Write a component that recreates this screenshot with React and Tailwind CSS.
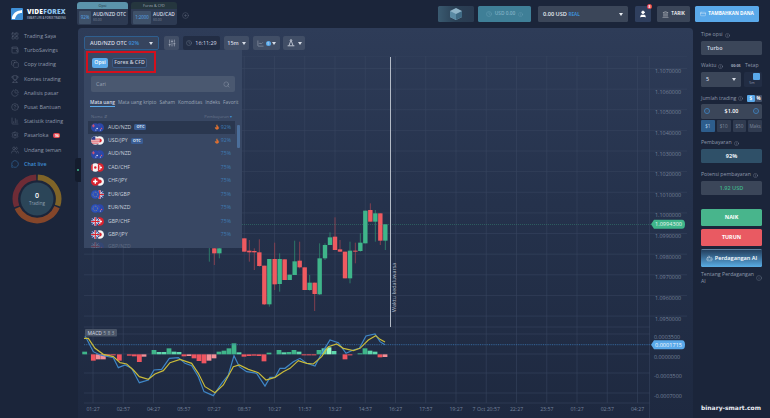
import { BarChart3, Clock, Copy, Flame, HelpCircle, Info, LayoutGrid, MessageCircle, Minus, PieChart, Plus, PlusCircle, Search, Settings, Trophy, User, Users, Wallet, CreditCard, Bot, SlidersHorizontal, LineChart, Landmark } from 'lucide-react';

const menu = [
  { label: 'Trading Saya', icon: LayoutGrid },
  { label: 'TurboSavings', icon: Wallet },
  { label: 'Copy trading', icon: Copy },
  { label: 'Kontes trading', icon: Trophy },
  { label: 'Analisis pasar', icon: PieChart },
  { label: 'Pusat Bantuan', icon: HelpCircle },
  { label: 'Statistik trading', icon: BarChart3 },
  { label: 'Pasarloka', icon: Settings, badge: true },
  { label: 'Undang teman', icon: Users },
  { label: 'Chat live', icon: MessageCircle, active: true },
];

const pairs = [
  { name: 'AUD/NZD', a: 'aud', b: 'nzd', pct: '92%', badge: 'OTC', hot: true },
  { name: 'USD/JPY', a: 'usd', b: 'jpy', pct: '92%', badge: 'OTC', hot: true },
  { name: 'AUD/NZD', a: 'aud', b: 'nzd', pct: '75%' },
  { name: 'CAD/CHF', a: 'cad', b: 'chf', pct: '75%' },
  { name: 'CHF/JPY', a: 'chf', b: 'jpy', pct: '75%' },
  { name: 'EUR/GBP', a: 'eur', b: 'gbp', pct: '75%' },
  { name: 'EUR/NZD', a: 'eur', b: 'nzd', pct: '75%' },
  { name: 'GBP/CHF', a: 'gbp', b: 'chf', pct: '75%' },
  { name: 'GBP/JPY', a: 'gbp', b: 'jpy', pct: '75%' },
];

// candles: x, body top, body bottom, wick top, wick bottom, up
const candles = [
  [388, 140, 141, 140, 185, 1], [403, 145, 160, 140, 195, 0], [418, 145, 160, 140, 175, 1],
  [493, 115, 155, 115, 155, 0], [508, 152, 157, 120, 185, 0], [523, 153, 157, 145, 210, 0],
  [538, 157, 198, 118, 200, 0], [553, 197, 313, 197, 315, 0], [568, 177, 313, 177, 320, 1],
  [584, 177, 253, 128, 270, 0], [599, 177, 252, 160, 275, 1], [614, 178, 240, 178, 240, 0],
  [629, 224, 240, 224, 240, 1], [644, 184, 225, 122, 225, 1], [659, 182, 202, 125, 205, 0],
  [674, 202, 270, 202, 270, 0], [689, 248, 270, 225, 272, 1], [704, 248, 282, 248, 333, 0],
  [719, 175, 283, 130, 285, 1], [735, 135, 175, 130, 180, 1], [750, 112, 135, 97, 135, 1],
  [765, 110, 150, 52, 150, 0], [780, 148, 155, 120, 156, 0], [795, 155, 235, 155, 235, 0],
  [810, 152, 235, 125, 250, 1], [826, 152, 155, 128, 190, 0], [841, 128, 153, 100, 155, 1],
  [856, 32, 130, 32, 130, 1], [871, 30, 65, 10, 65, 0], [886, 40, 65, 30, 125, 1],
  [901, 40, 122, 40, 135, 0], [916, 73, 122, 73, 150, 1],
];

// histogram: x, edge y, tone (g green, r red, l light red, m mint)
const histogram = [
  [14, 95, 'g'], [40, 122, 'r'], [55, 118, 'l'], [70, 118, 'l'], [85, 107, 'r'], [100, 106, 'r'], [118, 122, 'r'],
  [148, 107, 'r'], [163, 109, 'r'], [178, 126, 'r'], [192, 110, 'l'], [222, 90, 'g'], [237, 96, 'm'], [252, 96, 'm'],
  [267, 85, 'g'], [282, 95, 'm'], [297, 96, 'm'], [312, 109, 'r'], [327, 108, 'l'], [342, 115, 'r'], [357, 123, 'r'],
  [372, 130, 'r'], [387, 122, 'l'], [402, 115, 'l'], [417, 95, 'g'], [432, 92, 'g'], [447, 85, 'g'], [462, 70, 'g'],
  [477, 97, 'm'], [492, 110, 'r'], [507, 108, 'r'], [522, 107, 'r'], [537, 108, 'r'], [552, 124, 'r'], [567, 98, 'g'],
  [597, 90, 'g'], [612, 97, 'm'], [627, 96, 'g'], [642, 90, 'g'], [657, 95, 'm'], [672, 106, 'r'], [687, 106, 'r'],
  [702, 106, 'r'], [717, 90, 'g'], [732, 85, 'm'], [747, 82, 'b'], [762, 93, 'm'], [795, 118, 'r'], [810, 106, 'r'],
  [840, 100, 'g'], [855, 85, 'g'], [870, 92, 'm'], [885, 95, 'm'], [900, 112, 'r'], [915, 111, 'l'],
];

const toneColor = { g: '#3fb58a', m: '#5fd8ad', b: '#9dfbc8', r: '#ef5560', l: '#f48f97' };

const macdBlue = [[15, 47], [40, 95], [60, 105], [100, 113], [115, 143], [135, 135], [155, 145], [178, 188], [205, 180], [222, 150], [245, 148], [268, 115], [295, 113], [315, 130], [335, 137], [355, 170], [372, 215], [400, 227], [425, 190], [445, 165], [462, 107], [478, 140], [500, 155], [530, 160], [555, 198], [570, 172], [585, 172], [600, 145], [615, 145], [640, 125], [660, 115], [680, 130], [705, 138], [725, 100], [750, 60], [775, 68], [798, 100], [820, 90], [838, 85], [858, 48], [885, 42], [900, 65], [915, 74]];
const macdYellow = [[12, 55], [25, 55], [45, 85], [70, 103], [100, 110], [120, 128], [140, 132], [160, 150], [178, 170], [205, 178], [225, 162], [250, 152], [270, 128], [300, 118], [335, 130], [355, 160], [375, 200], [405, 218], [430, 195], [460, 140], [478, 135], [505, 148], [535, 158], [558, 180], [585, 172], [610, 155], [630, 145], [655, 122], [680, 130], [700, 132], [725, 110], [745, 80], [770, 72], [790, 85], [820, 92], [840, 85], [865, 60], [887, 47], [900, 58], [915, 66]];

const times = ['01:27', '02:57', '04:27', '05:57', '07:27', '08:57', '10:27', '11:57', '13:27', '14:57', '16:27', '17:57', '19:27', '7 Oct 20:57', '22:27', '23:57', '01:27', '02:57', '04:27'];
const prices = ['1.1070000', '1.1060000', '1.1050000', '1.1040000', '1.1030000', '1.1020000', '1.1010000', '1.1000000', '1.0990000', '1.0980000', '1.0970000', '1.0960000', '1.0950000'];
const macdLevels = [['0.0003500', 337], ['0.0000000', 357], ['-0.0003500', 376], ['-0.0007000', 396]];

function macdPoints(list) {
  return list.map(([x, y]) => `${80 + x / 3},${320 + y / 3}`).join(' ');
}

function Caret() {
  return (
    <svg width="4" height="3" viewBox="0 0 4 3" className="shrink-0">
      <path d="M0 0h4L2 3z" fill="currentColor" />
    </svg>
  );
}

function Coin({ kind, cx }) {
  const r = 4.3;
  const cy = 4.5;
  if (kind === 'aud' || kind === 'nzd') {
    return (
      <g>
        <circle cx={cx} cy={cy} r={r} fill="#2b47a8" />
        <path d={`M${cx - 3.4} ${cy - 1.6}h3M${cx - 1.9} ${cy - 3.2}v3`} stroke="#e2566a" strokeWidth="0.9" />
        <circle cx={cx + 1.8} cy={cy + 1} r="0.7" fill={kind === 'aud' ? '#fff' : '#e2566a'} />
        <circle cx={cx + 0.6} cy={cy + 2.4} r="0.5" fill="#fff" />
      </g>
    );
  }
  if (kind === 'usd') {
    return (
      <g>
        <circle cx={cx} cy={cy} r={r} fill="#f2f2f2" />
        <path d={`M${cx - 3.8} ${cy - 1.4}h7.6M${cx - 4.2} ${cy + 0.6}h8.4M${cx - 3.4} ${cy + 2.6}h6.8`} stroke="#d8323f" strokeWidth="0.9" />
        <path d={`M${cx - 3.8} ${cy - 2}a4.3 4.3 0 0 1 3.8 -2.3v3.6h-3.8z`} fill="#2b3f90" />
      </g>
    );
  }
  if (kind === 'jpy') {
    return (
      <g>
        <circle cx={cx} cy={cy} r={r} fill="#f4f4f4" />
        <circle cx={cx} cy={cy} r="2" fill="#d8232f" />
      </g>
    );
  }
  if (kind === 'cad') {
    return (
      <g>
        <circle cx={cx} cy={cy} r={r} fill="#f4f4f4" />
        <path d={`M${cx - 4.2} ${cy - 1.2}a4.3 4.3 0 0 1 1.6 -2.5v7.4a4.3 4.3 0 0 1 -1.6 -2.5zM${cx + 4.2} ${cy - 1.2}a4.3 4.3 0 0 0 -1.6 -2.5v7.4a4.3 4.3 0 0 0 1.6 -2.5z`} fill="#d8232f" />
        <circle cx={cx} cy={cy} r="1.2" fill="#d8232f" />
      </g>
    );
  }
  if (kind === 'chf') {
    return (
      <g>
        <circle cx={cx} cy={cy} r={r} fill="#d8232f" />
        <path d={`M${cx - 2.2} ${cy}h4.4M${cx} ${cy - 2.2}v4.4`} stroke="#fff" strokeWidth="1.4" />
      </g>
    );
  }
  if (kind === 'eur') {
    return (
      <g>
        <circle cx={cx} cy={cy} r={r} fill="#2a4fbc" />
        <circle cx={cx} cy={cy} r="2.3" fill="none" stroke="#e6c94a" strokeWidth="0.6" strokeDasharray="0.7 0.9" />
      </g>
    );
  }
  return (
    <g>
      <circle cx={cx} cy={cy} r={r} fill="#2f4694" />
      <path d={`M${cx - 3} ${cy - 3}l6 6M${cx + 3} ${cy - 3}l-6 6`} stroke="#f3f3f3" strokeWidth="1" />
      <path d={`M${cx - 4.2} ${cy}h8.4M${cx} ${cy - 4.2}v8.4`} stroke="#f3f3f3" strokeWidth="2" />
      <path d={`M${cx - 4.2} ${cy}h8.4M${cx} ${cy - 4.2}v8.4`} stroke="#d8232f" strokeWidth="1.1" />
    </g>
  );
}

function Flags({ a, b }) {
  return (
    <svg width="13" height="9" viewBox="0 0 13 9" className="shrink-0">
      <Coin kind={b} cx={8.7} />
      <Coin kind={a} cx={4.3} />
    </svg>
  );
}

function arc(from, to, r) {
  const p = (deg) => {
    const t = ((deg - 90) * Math.PI) / 180;
    return `${25 + r * Math.cos(t)} ${25 + r * Math.sin(t)}`;
  };
  return `M${p(from)} A${r} ${r} 0 ${to - from > 180 ? 1 : 0} 1 ${p(to)}`;
}

function Label({ children }) {
  return (
    <div className="flex h-[6px] items-center gap-[2px] text-[5.2px] leading-none whitespace-nowrap text-[#8d98aa]">
      {children}
      <Info size={5} strokeWidth={1.5} />
    </div>
  );
}

function Sidebar() {
  return (
    <aside className="relative flex w-[78px] shrink-0 flex-col pt-[1px]">
      {menu.map((item) => {
        const Icon = item.icon;
        return (
          <div key={item.label} className={`flex h-[14.2px] items-center gap-[5px] pl-[11px] text-[5.4px] ${item.active ? 'font-semibold text-[#3f8fd6]' : 'text-[#8e98aa]'}`}>
            <Icon size={8} strokeWidth={1.2} className={item.active ? 'text-[#3f8fd6]' : 'text-[#6a7588]'} />
            <span>{item.label}</span>
            {item.badge && <span className="rounded-[2px] bg-[#e5484d] px-[1.5px] text-[3.5px] leading-[5px] font-bold text-white">96</span>}
          </div>
        );
      })}
      <div className="absolute top-[130px] right-[-3px] z-10 flex h-[24px] w-[6px] items-center justify-center rounded-l-[3px] bg-[#141c2d]">
        <span className="h-[2px] w-[2px] rounded-full bg-[#3fb58a]" />
      </div>
      <div className="relative mt-[3px] ml-[12px] h-[50px] w-[50px]">
        <svg width="50" height="50" viewBox="0 0 50 50">
          <path d={arc(2, 108, 21.6)} fill="none" stroke="#7f6428" strokeWidth="5.6" />
          <path d={arc(112, 246, 21.6)} fill="none" stroke="#84462a" strokeWidth="5.6" />
          <path d={arc(250, 358, 21.6)} fill="none" stroke="#6e2c36" strokeWidth="5.6" />
          <circle cx="25" cy="25" r="16.5" fill="#2b4558" />
        </svg>
        <div className="absolute inset-0 flex flex-col items-center justify-center text-white">
          <span className="text-[7px] leading-[8px] font-semibold">0</span>
          <span className="text-[4.5px] leading-[6px] text-[#8fa0b0]">Trading</span>
        </div>
      </div>
    </aside>
  );
}

function Toolbar() {
  return (
    <div className="flex h-[28px] items-start gap-[4px] pt-[8px] pl-[6px] text-[5.4px] text-[#d5dbe5]">
      <div className="flex h-[14px] w-[75px] items-center justify-between rounded-[2px] border border-[#2f5f8f] bg-[#36445e] px-[5px] font-semibold">
        <span>AUD/NZD OTC <span className="text-[#3f8fd6]">92%</span></span>
        <Caret />
      </div>
      <div className="ml-[1px] flex h-[14px] w-[15px] items-center justify-center rounded-[2px] bg-[#414e66]">
        <SlidersHorizontal size={8} strokeWidth={1.4} className="rotate-90" />
      </div>
      <div className="flex h-[14px] w-[37px] items-center justify-center gap-[3px] rounded-[2px] bg-[#222d44]">
        <Clock size={6} strokeWidth={1.2} className="text-[#8d98aa]" />
        <span>16:11:29</span>
      </div>
      <div className="flex h-[14px] w-[25px] items-center justify-center gap-[3px] rounded-[2px] bg-[#414e66] font-semibold">
        15m <Caret />
      </div>
      <div className="flex h-[14px] w-[27px] items-center justify-center gap-[1.5px] rounded-[2px] bg-[#414e66]">
        <LineChart size={7} strokeWidth={1.2} />
        <span className="h-[5px] w-[5px] rounded-full bg-[#5aa9ea] text-center text-[4px] leading-[5px] text-white">1</span>
        <Caret />
      </div>
      <div className="ml-[-1px] flex h-[14px] w-[22px] items-center justify-center gap-[3px] rounded-[2px] bg-[#414e66]">
        <svg width="8" height="8" viewBox="0 0 8 8" fill="none" stroke="currentColor" strokeWidth="0.8">
          <circle cx="4" cy="1.4" r="0.8" />
          <path d="M3.6 2.2L2 6.6M4.4 2.2L6 6.6M0.6 6.8h6.8" />
        </svg>
        <Caret />
      </div>
    </div>
  );
}

function AssetDropdown() {
  return (
    <div className="absolute top-[22px] left-[6px] z-10 h-[198px] w-[158px] overflow-hidden bg-[#384763] text-[#c9d0dc]">
      <div className="absolute top-[1px] left-[2px] h-[22px] w-[70px] border-2 border-[#d4101c]" />
      <div className="flex gap-[4px] pt-[8px] pl-[8px] text-[5.2px] font-semibold">
        <span className="flex h-[10px] w-[16px] items-center justify-center rounded-[2px] bg-[#5aa9ea] text-white">Opsi</span>
        <span className="flex h-[10px] w-[35px] items-center justify-center rounded-[2px] border border-[#3c5a85] bg-[#2f3d58]">Forex &amp; CFD</span>
      </div>
      <div className="mx-[7px] mt-[8px] flex h-[16px] items-center justify-between rounded-[2px] bg-[#4a5870] px-[5px] text-[5.4px] text-[#97a2b3]">
        <span>Cari</span>
        <Search size={7} strokeWidth={1.4} />
      </div>
      <div className="mt-[7px] ml-[6px] flex gap-[3px] text-[4.85px] whitespace-nowrap text-[#9aa5b6]">
        <span className="border-b border-[#5aa9ea] font-semibold text-[#d5dbe5]">Mata uang</span>
        <span>Mata uang kripto</span>
        <span>Saham</span>
        <span>Komoditas</span>
        <span>Indeks</span>
        <span>Favorit</span>
      </div>
      <div className="mt-[6.5px] flex h-[7px] items-center justify-between pr-[10px] pl-[7px] text-[4.2px] text-[#67738a]">
        <span>Nama ⇵</span>
        <span>Pembayaran <span className="text-[#3f8fd6]">▾</span></span>
      </div>
      <div className="mx-[4px] w-[147px]">
        {pairs.map((pair, i) => (
          <div key={i} className={`flex h-[13.45px] items-center gap-[3px] pr-[4px] pl-[3px] text-[5.2px] ${i === 0 ? 'bg-[#2a374f]' : ''}`}>
            <Flags a={pair.a} b={pair.b} />
            <span className="ml-[1px]">{pair.name}</span>
            {pair.badge && <span className="rounded-[1.5px] bg-[#3a5d94] px-[2px] text-[4px] leading-[6px] font-bold text-[#dbe5f3]">{pair.badge}</span>}
            <span className="ml-auto flex items-center gap-[1px] text-[#3f7cb5]">
              {pair.hot && <Flame size={6} strokeWidth={1} className="fill-[#e8682c] text-[#f0a040]" />}
              {pair.pct}
            </span>
          </div>
        ))}
        <div className="flex h-[10px] items-center gap-[3px] pl-[3px] text-[5.2px] opacity-25">
          <Flags a="gbp" b="nzd" />
          <span className="ml-[1px]">GBP/NZD</span>
        </div>
      </div>
      <div className="absolute top-[75px] right-[2px] h-[23px] w-[3.5px] rounded-[1px] bg-[#4b6e9a]" />
    </div>
  );
}

function Chart() {
  const vLines = times.map((_, i) => 93 + i * 30.25);
  const hLines = prices.map((_, i) => 68.5 + i * 20.63);
  return (
    <svg className="block h-[362px] w-[615px]" viewBox="78 56 615 362" fontFamily="'Open Sans', sans-serif">
      <g stroke="#3d4a64" strokeWidth="0.6" opacity="0.8">
        {vLines.map((x) => <line key={x} x1={x} x2={x} y1="56" y2="403" />)}
        {hLines.map((y) => <line key={y} x1="84" x2="687" y1={y} y2={y} />)}
        <line x1="84" x2="687" y1="56" y2="56" />
        <line x1="84" x2="650" y1="327" y2="327" />
        {[334, 354, 373, 393, 403].map((y) => <line key={y} x1="84" x2="650" y1={y} y2={y} />)}
        <line x1="649.5" x2="649.5" y1="56" y2="418" />
      </g>

      {prices.map((p, i) => (
        <text key={p} x="655" y={73 + i * 20.63} fontSize="5.4" fill="#75829a">{p}</text>
      ))}
      {macdLevels.map(([p, y]) => (
        <text key={p} x="654" y={y + 2} fontSize="5.4" fill="#75829a">{p}</text>
      ))}
      {times.map((t, i) => (
        <text key={i} x={vLines[i]} y="411" fontSize="5.2" fill="#75829a" textAnchor="middle">{t}</text>
      ))}

      {candles.map(([x, top, bottom, wickTop, wickBottom, up]) => {
        const px = 80 + x / 3;
        return (
          <g key={x}>
            <line x1={px} x2={px} y1={200 + wickTop / 3} y2={200 + wickBottom / 3} stroke={up ? '#2f8a6f' : '#9b4450'} strokeWidth="0.8" />
            <rect x={px - 2.2} y={200 + top / 3} width="4.4" height={(bottom - top) / 3} fill={up ? '#3fb58a' : '#ef5a60'} />
          </g>
        );
      })}

      <line x1="242" x2="651" y1="224.3" y2="224.3" stroke="#3fb58a" strokeWidth="0.6" strokeDasharray="1 1" opacity="0.7" />
      <path d="M651 224.3l3 -4.5h28q3 0 3 4.5t-3 4.5h-28z" fill="#3fb58a" />
      <text x="668.5" y="226.3" fontSize="5.6" fill="#e8f6f0" textAnchor="middle">1.0994300</text>

      <line x1="390.5" x2="390.5" y1="57" y2="327" stroke="#b4bbc6" strokeWidth="1" />
      <text transform="translate(396 312) rotate(-90)" fontSize="5.4" fill="#b0b9c6">Waktu kedaluwarsa</text>

      {histogram.map(([x, edge, tone]) => {
        const y = 320 + Math.min(edge, 103) / 3;
        const h = Math.abs(edge - 103) / 3;
        return <rect key={x} x={80 + x / 3 - 2.4} y={y} width="4.8" height={h} fill={toneColor[tone]} />;
      })}

      <line x1="84" x2="651" y1="344.7" y2="344.7" stroke="#3d7fc0" strokeWidth="0.7" strokeDasharray="1 0.8" />
      <polyline points={macdPoints(macdBlue)} fill="none" stroke="#3f86c6" strokeWidth="1.2" />
      <polyline points={macdPoints(macdYellow)} fill="none" stroke="#c9bb3a" strokeWidth="1.2" />

      <path d="M651 344.7l3 -4.5h28q3 0 3 4.5t-3 4.5h-28z" fill="#5aa9ea" />
      <text x="668.5" y="346.7" fontSize="5.6" fill="#f2f8fe" textAnchor="middle">0.0001715</text>

      <rect x="85" y="329" width="32" height="7.5" rx="1" fill="#4a5568" />
      <text x="87.5" y="334.7" fontSize="5" fill="#d5dbe5">MACD <tspan fill="#a3adbb">5 8 3</tspan></text>
    </svg>
  );
}

function TradePanel() {
  return (
    <aside className="flex w-[77px] shrink-0 flex-col pt-[4px] pr-[8px] pl-[8px] text-[#d5dbe5]">
      <Label>Tipe opsi</Label>
      <div className="mt-[3px] flex h-[14px] items-center rounded-[1.5px] bg-[#3b4659] pl-[6px] text-[5.4px] font-semibold">Turbo</div>

      <div className="mt-[8px] flex h-[6px] items-center">
        <div className="w-[30px]"><Label>Waktu</Label></div>
        <span className="w-[14px] text-[3.8px] font-bold text-[#a3adbb]">00:05</span>
        <span className="text-[5.2px] text-[#8d98aa]">Tetap</span>
      </div>
      <div className="mt-[3px] flex h-[15px] gap-[3px]">
        <div className="flex w-[40px] items-center justify-between rounded-[1.5px] bg-[#3b4659] px-[5px] text-[5.4px] font-semibold">
          5 <Caret />
        </div>
        <div className="flex w-[18px] flex-col items-end rounded-[1.5px] bg-[#222d44] pt-[1px] pr-[2px]">
          <span className="h-[7px] w-[7px] rounded-[1px] bg-[#5aa9ea]" />
          <span className="mt-[1px] w-full text-center text-[3.6px] leading-[4px] text-[#8d98aa]">5m</span>
        </div>
      </div>

      <div className="mt-[8px] flex h-[7px] items-center justify-between">
        <Label>Jumlah trading</Label>
        <div className="flex gap-[0.5px] text-[4.6px] font-bold text-white">
          <span className="flex h-[7px] w-[7.5px] items-center justify-center rounded-[1px] bg-[#5aa9ea]">$</span>
          <span className="flex h-[7px] w-[7px] items-center justify-center rounded-[1px] bg-[#414e66]">%</span>
        </div>
      </div>
      <div className="mt-[2px] flex h-[14.5px] items-center justify-between rounded-[1.5px] bg-[#3b4659] px-[3px] text-[5.4px] font-semibold text-white">
        <Minus size={6} strokeWidth={1.5} className="rounded-full border-[0.5px] border-[#3f7cb5] text-[#3f7cb5]" />
        $1.00
        <Plus size={6} strokeWidth={1.5} className="rounded-full border-[0.5px] border-[#3f7cb5] text-[#3f7cb5]" />
      </div>
      <div className="mt-[1.5px] grid h-[12px] grid-cols-4 gap-[2px] text-center text-[4.6px] leading-[12px] text-[#7d889b]">
        <span className="rounded-[1px] bg-[#2d5d8c] text-[#b7d2ea]">$1</span>
        <span className="rounded-[1px] bg-[#303b50]">$10</span>
        <span className="rounded-[1px] bg-[#303b50]">$50</span>
        <span className="rounded-[1px] bg-[#303b50]">Maks</span>
      </div>

      <div className="mt-[8px]"><Label>Pembayaran</Label></div>
      <div className="mt-[3px] flex h-[14px] items-center justify-center rounded-[1.5px] bg-[#2f5068] text-[5.6px] font-bold text-[#e8eef5]">92%</div>

      <div className="mt-[9px]"><Label>Potensi pembayaran</Label></div>
      <div className="mt-[3px] flex h-[14px] items-center justify-center rounded-[1.5px] bg-[#3b4659] text-[5.6px] font-semibold text-[#3fb58a]">1.92 USD</div>

      <button className="mt-[14px] h-[17px] rounded-[1.5px] bg-[#48b58c] text-[5.4px] font-bold text-white">NAIK</button>
      <button className="mt-[3px] h-[17px] rounded-[1.5px] bg-[#e95a62] text-[5.4px] font-bold text-white">TURUN</button>
      <button className="mt-[3px] flex h-[18px] items-center justify-center gap-[2px] rounded-[1.5px] border-t border-[#5f7f9c] bg-gradient-to-b from-[#24405f] to-[#5aaee6] text-[5.6px] font-semibold whitespace-nowrap text-white">
        <Bot size={7} strokeWidth={1.2} />
        Perdagangan AI
      </button>
      <div className="mt-[4px] flex items-center justify-between text-[5.2px] leading-[7px] text-[#8d98aa]">
        <span className="whitespace-nowrap">Tentang Perdagangan<br />AI</span>
        <Info size={6} strokeWidth={1.2} className="shrink-0" />
      </div>
      <div className="mt-auto mr-[-6px] mb-[6px] whitespace-nowrap font-['DejaVu_Sans',sans-serif] text-[6px] leading-[8px] font-bold text-[#e8ecf2]">binary-smart.com</div>
    </aside>
  );
}

function Header() {
  return (
    <header className="flex h-[28px] items-start text-[#d5dbe5]">
      <div className="flex w-[77px] shrink-0 items-center gap-[1px] pt-[8px] pl-[11px]">
        <svg width="12" height="12" viewBox="0 0 12 12" className="shrink-0">
          <rect width="12" height="12" rx="1" fill="#3f8fd6" />
          <path d="M1 9 C3 4 6 3 11 2 L11 5 C7 5 5 7 4 11 L1 11z" fill="#fff" />
        </svg>
        <div className="ml-[3px] leading-none">
          <div className="text-[6.6px] font-extrabold tracking-[0.2px] whitespace-nowrap text-white">VIDE<span className="text-[#8fc4ee]">FOREX</span></div>
          <div className="mt-[1px] text-[2.6px] font-bold whitespace-nowrap text-[#8d98aa]">SMART LIFE &amp; FOREX TRADING</div>
        </div>
      </div>

      <div className="mt-[2px] w-[51px] overflow-hidden rounded-t-[3px]">
        <div className="h-[7px] bg-[#5b93ab] text-center text-[3.8px] leading-[7px] text-[#1f3444]">Opsi</div>
        <div className="flex h-[16px] items-center gap-[2px] rounded-b-[2px] bg-[#2d3a52] pl-[2px]">
          <span className="flex h-[13px] w-[12px] items-center justify-center rounded-[1px] bg-[#3f5169] text-[4.4px] text-[#5aa9ea]">92%</span>
          <div className="leading-none whitespace-nowrap">
            <div className="text-[4.8px] font-semibold">AUD/NZD OTC</div>
            <div className="mt-[1px] text-[3.4px] text-[#7d889b]">$0.00</div>
          </div>
        </div>
      </div>
      <div className="mt-[2px] ml-[3px] w-[46px] overflow-hidden rounded-t-[3px]">
        <div className="h-[7px] bg-[#25363e] text-center text-[3.8px] leading-[7px] text-[#a3adbb]">Forex &amp; CFD</div>
        <div className="flex h-[16px] items-center gap-[2px] rounded-b-[2px] bg-[#2d3a52] pl-[2px]">
          <span className="flex h-[13px] w-[18px] items-center justify-center rounded-[1px] bg-[#3f5169] text-[4.4px] text-[#5aa9ea]">1:2000</span>
          <div className="leading-none whitespace-nowrap">
            <div className="text-[4.8px] font-semibold">AUD/CAD</div>
            <div className="mt-[1px] text-[3.4px] text-[#7d889b]">$0.00</div>
          </div>
        </div>
      </div>
      <PlusCircle size={7} strokeWidth={1.2} className="mt-[12px] ml-[5px] text-[#6a7588]" />

      <div className="mt-[6px] ml-[249px] flex h-[16px] w-[36px] items-center justify-center rounded-[1.5px] bg-gradient-to-r from-[#3a5a70] via-[#2a4055] to-[#2a3a50]">
        <svg width="14" height="14" viewBox="0 0 14 14">
          <path d="M7 1l6 3v6l-6 3-6-3V4z" fill="#8fb4c8" />
          <path d="M7 7l6-3v6l-6 3z" fill="#3f6a84" />
          <path d="M7 7L1 4v6l6 3z" fill="#5a8aa4" />
        </svg>
      </div>
      <div className="mt-[6px] ml-[4px] flex h-[16px] w-[53px] items-center justify-center gap-[3px] rounded-[1.5px] bg-[#3f7f97] text-[4.8px] font-semibold text-[#7fb0c4]">
        <Clock size={6} strokeWidth={1.2} />
        USD 0.00
        <Info size={5} strokeWidth={1.2} />
      </div>
      <div className="mt-[6px] ml-[7px] flex h-[16px] w-[90px] items-center justify-between rounded-[1.5px] bg-[#3b4659] pr-[5px] pl-[5px] text-[5.6px] font-semibold text-[#e8ecf2]">
        <span>0.00 USD <span className="text-[4.6px] font-bold text-[#3f8fd6]">REAL</span></span>
        <Caret />
      </div>
      <div className="relative mt-[6px] ml-[7px] flex h-[16px] w-[16px] items-center justify-center rounded-[1.5px] bg-[#2f3f5e]">
        <User size={8} strokeWidth={2} className="fill-white text-white" />
        <span className="absolute top-[-2px] right-[-1px] flex h-[5px] w-[5px] items-center justify-center rounded-full bg-[#e5484d] text-[3.4px] font-bold text-white">8</span>
      </div>
      <div className="mt-[6px] ml-[6px] flex h-[16px] w-[33px] items-center justify-center gap-[2px] rounded-[1.5px] bg-[#3b4659] text-[4.8px] font-semibold text-white">
        <Landmark size={7} strokeWidth={1.2} />
        TARIK
      </div>
      <div className="mt-[6px] ml-[5px] flex h-[16px] w-[64px] items-center justify-center gap-[2px] rounded-[1.5px] bg-[#5aa9ea] text-[4.7px] font-bold whitespace-nowrap text-white">
        <CreditCard size={6} strokeWidth={1.2} />
        TAMBAHKAN DANA
      </div>
    </header>
  );
}

export default function App() {
  return (
    <div className="flex h-[418px] w-[770px] flex-col overflow-hidden bg-[#1b253a] font-['Open_Sans',sans-serif]">
      <Header />
      <div className="flex min-h-0 flex-1">
        <Sidebar />
        <main className="relative w-[615px] shrink-0 rounded-t-[4px] bg-gradient-to-b from-[#2e3c58] via-[#25324c] via-45% to-[#1e2940]">
          <Toolbar />
          <AssetDropdown />
          <Chart />
        </main>
        <TradePanel />
      </div>
    </div>
  );
}
